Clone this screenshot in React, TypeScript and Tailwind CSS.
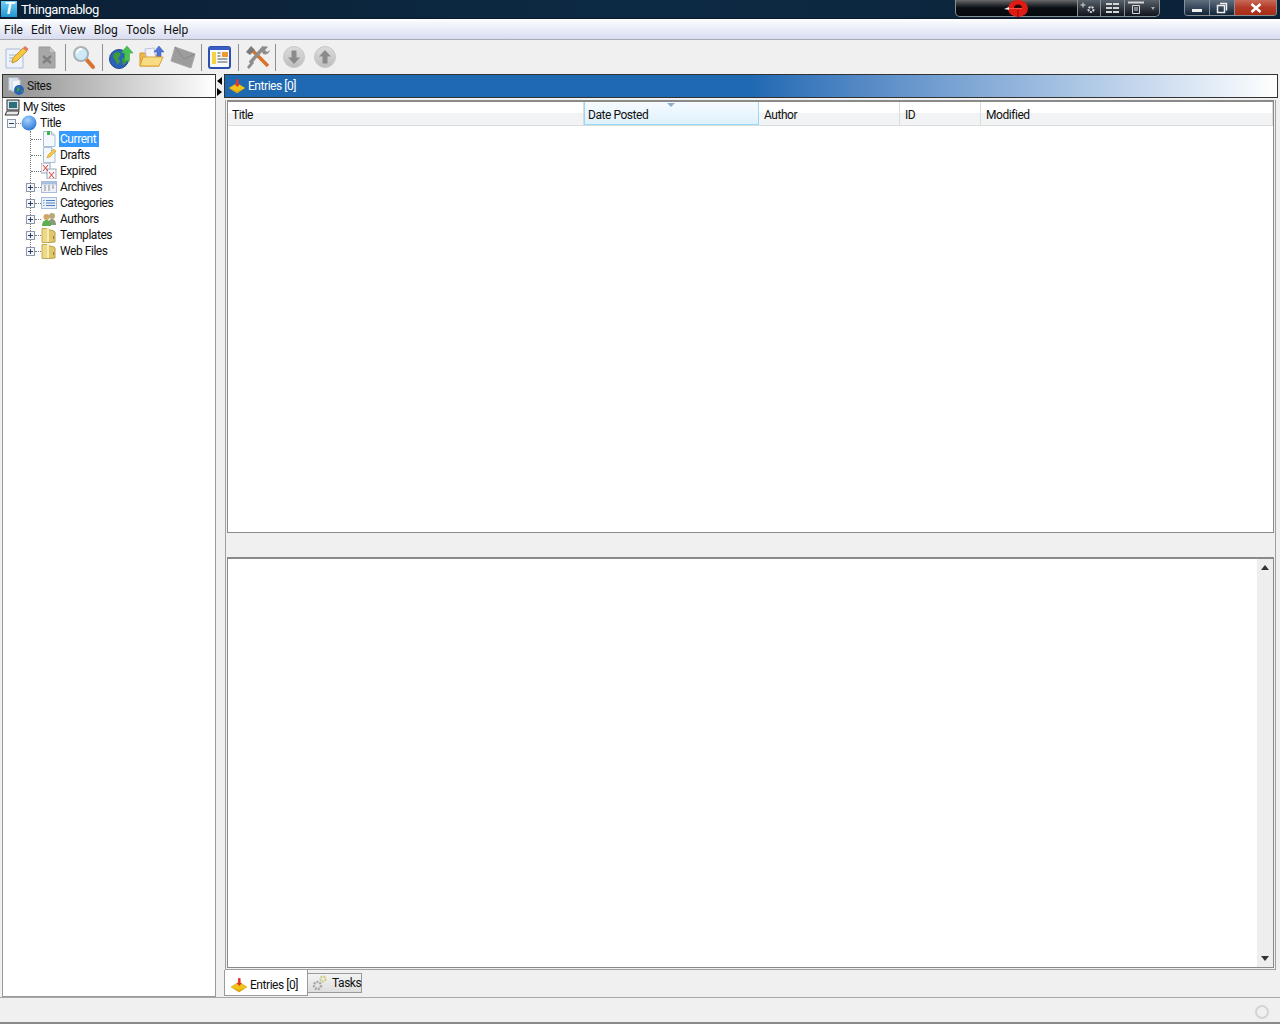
import React from "react";

const Doc = ({ children }: { children?: React.ReactNode }) => (
  <svg width="16" height="16" viewBox="0 0 16 16" className="shrink-0">
    <path d="M2.500 .5h8l3.500 3.500v11.500h-11.500z" fill="#f4f8fd" stroke="#a9bfd8" />
    <path d="M10.500 .5v3.500h3.500" fill="#dbe7f4" stroke="#a9bfd8" />
    {children}
  </svg>
);

const Folder = () => (
  <svg width="16" height="16" viewBox="0 0 16 16" className="shrink-0">
    <path d="M1 1.500h5l1 1v13h-6z" fill="#ecd98a" stroke="#c2aa55" />
    <path d="M7 2.500l6 1.500 1 1v10l-7 .5z" fill="#e2c86c" stroke="#b89c45" />
    <rect x="6" y="1" width="2" height="14" fill="#f7ecb8" />
    <rect x="12" y="9" width="1" height="3" fill="#9a8030" />
  </svg>
);

const Hat = ({ s = 16 }: { s?: number }) => (
  <svg width={s} height={s} viewBox="0 0 16 16" className="shrink-0">
    <path d="M0 10 L8 5 L16 10 L8 15z" fill="#f0c419" stroke="#c99a10" strokeWidth=".5" />
    <path d="M2 11 L8 15 L14 11 L8 13z" fill="#d9a514" />
    <rect x="7" y="1" width="2.600" height="6" rx="1" fill="#e2382b" />
    <path d="M5.500 6h5.500l-2.700 3z" fill="#e2382b" />
  </svg>
);

const Expander = ({ minus }: { minus?: boolean }) => (
  <span className="relative w-[9px] h-[9px] border border-[#8a97a8] bg-[#f3f5f8] shrink-0">
    <span className="absolute left-[1px] top-[3px] w-[5px] h-[1px] bg-[#2b3a63]" />
    {!minus && <span className="absolute left-[3px] top-[1px] w-[1px] h-[5px] bg-[#2b3a63]" />}
  </span>
);

const Dash = ({ w }: { w: string }) => (
  <span className={`${w} h-0 border-t border-dotted border-[#777] shrink-0`} />
);

const Leaf = ({ icon, label, selected }: { icon: React.ReactNode; label: string; selected?: boolean }) => (
  <div className="h-4 flex items-center pl-[28px]">
    <Dash w="w-[10px]" />
    <span className="w-4 flex justify-center shrink-0">{icon}</span>
    <span className={`ml-[2px] pl-[1px] pr-[3px] h-4 leading-4 ${selected ? "bg-[#3399ff] text-white" : ""}`}>{label}</span>
  </div>
);

const Branch = ({ icon, label }: { icon: React.ReactNode; label: string }) => (
  <div className="h-4 flex items-center pl-[23px]">
    <Expander />
    <Dash w="w-[6px]" />
    <span className="w-4 flex justify-center shrink-0">{icon}</span>
    <span className="ml-[2px] pl-[1px] h-4 leading-4">{label}</span>
  </div>
);

const Sep = () => <span className="w-[1px] h-[27px] bg-[#8f8f8f] shrink-0" />;

const ToolIcon = ({ children }: { children: React.ReactNode }) => (
  <svg width="26" height="26" viewBox="0 0 26 26" className="shrink-0">{children}</svg>
);

const Circle = ({ up }: { up?: boolean }) => (
  <ToolIcon>
    <defs>
      <linearGradient id={up ? "cu" : "cd"} x1="0" y1="0" x2="0" y2="1">
        <stop offset="0" stopColor="#dcdcdc" />
        <stop offset="1" stopColor="#bdbdbd" />
      </linearGradient>
    </defs>
    <circle cx="13" cy="13" r="10.500" fill={`url(#${up ? "cu" : "cd"})`} stroke="#c8c8c8" />
    <path
      d={up ? "M13 6l6 6.500h-3.500v7h-5v-7h-3.500z" : "M13 20l6-6.500h-3.500v-7h-5v7h-3.500z"}
      fill="#8a8a8a"
    />
  </ToolIcon>
);

export default function App() {
  const columns = [
    { label: "Title", w: "w-[356px]", pl: "pl-[4px]" },
    { label: "Date Posted", w: "w-[175px]", active: true, pl: "pl-[3px]" },
    { label: "Author", w: "w-[141px]", pl: "pl-[5px]" },
    { label: "ID", w: "w-[81px]", pl: "pl-[5px]" },
    { label: "Modified", w: "flex-1", pl: "pl-[5px]" },
  ];
  return (
    <div className="w-[1280px] h-[1024px] overflow-hidden flex flex-col bg-[#f0f0f0] text-[12px] tracking-[-.45px] text-[#111] font-['Roboto','Liberation_Sans',sans-serif]">
      {/* Title bar */}
      <div className="h-[19px] shrink-0 flex bg-gradient-to-r from-[#0a2036] via-[#0d2a44] to-[#0b2238] border-b border-[#0c1a28]">
        <div className="w-[16px] h-[16px] mt-[1px] ml-[1px] bg-gradient-to-b from-[#6fd0f5] to-[#1d94d0] text-white font-bold italic text-[16px] leading-[16px] text-center font-['Liberation_Sans',sans-serif]">T</div>
        <span className="ml-[4px] text-white text-[13px] tracking-[-.45px] leading-[19px]">Thingamablog</span>
        <div className="ml-auto flex h-[17px] text-[#dfe6ee]">
          <div className="w-[123px] bg-gradient-to-b from-[#6b6b6b] via-[#0a0f14] to-[#05090d] border border-t-0 border-[#8a8f94] rounded-bl-[5px] flex justify-center">
            <svg width="26" height="17" viewBox="0 0 26 17">
              <ellipse cx="14" cy="8.500" rx="10" ry="8.500" fill="#e01b14" />
              <path d="M10 8a4 3.500 0 0 1 8 0z" fill="#2a0605" />
              <path d="M13.500 10h1v7h-1z" fill="#7a0d0a" />
              <path d="M5 8.500h13" stroke="#ff6a5a" strokeWidth=".7" />
              <path d="M0 9l5-2v3z" fill="#f2f2f2" />
            </svg>
          </div>
          <div className="w-[23px] bg-gradient-to-b from-[#59616a] to-[#10161d] border-r border-b border-[#8a8f94] flex items-center justify-center">
            <svg width="18" height="14" viewBox="0 0 18 14" fill="none" stroke="#d6d6d6">
              <path d="M3 1.500v5M.5 4h5" />
              <circle cx="11" cy="8.500" r="2.500" strokeWidth="2" strokeDasharray="2 1" />
            </svg>
          </div>
          <div className="w-[24px] bg-gradient-to-b from-[#59616a] to-[#10161d] border-r border-b border-[#8a8f94] flex items-center justify-center">
            <svg width="15" height="10" viewBox="0 0 15 10" fill="#d6d6d6">
              <path d="M1 0h6v2H1zM8 0h6v2H8zM1 4h6v2H1zM8 4h6v2H8zM1 8h6v2H1zM8 8h6v2H8z" />
            </svg>
          </div>
          <div className="w-[35px] bg-gradient-to-b from-[#59616a] to-[#10161d] border-r border-b border-[#8a8f94] rounded-br-[5px] flex items-center justify-center">
            <svg width="30" height="16" viewBox="0 0 30 16" fill="none" stroke="#d6d6d6">
              <path d="M1 2.500h16" strokeWidth="2" />
              <path d="M5.500 5.500h7v8h-7zM7 8h4M7 10h4" />
              <path d="M24 7h4l-2 3z" fill="#aaa" stroke="none" />
            </svg>
          </div>
          <div className="ml-[24px] mr-[3px] flex w-[93px] h-[16px] border border-t-0 border-[#8a8f94] rounded-b-[4px] overflow-hidden">
            <div className="w-[25px] bg-gradient-to-b from-[#5f6f7e] to-[#12263a] border-r border-[#8a8f94] flex items-center justify-center pt-[5px]">
              <span className="w-[10px] h-[3px] bg-[#f0f0f0]" />
            </div>
            <div className="w-[25px] bg-gradient-to-b from-[#5f6f7e] to-[#12263a] border-r border-[#8a8f94] flex items-center justify-center">
              <svg width="12" height="12" viewBox="0 0 12 12" fill="none" stroke="#eee" strokeWidth="1.500">
                <path d="M4 1.500h6.500v7" />
                <path d="M1.500 3.500h7v7h-7z" />
              </svg>
            </div>
            <div className="flex-1 bg-gradient-to-b from-[#c9695a] via-[#b33a26] to-[#a82d14] flex items-center justify-center">
              <svg width="12" height="10" viewBox="0 0 12 10" stroke="#fff" strokeWidth="2.500">
                <path d="M1.500 1l9 8M10.500 1l-9 8" />
              </svg>
            </div>
          </div>
        </div>
      </div>

      {/* Menu bar */}
      <div className="h-[21px] shrink-0 flex items-center border-t border-white border-b border-b-[#a9a9b0] bg-gradient-to-b from-[#fbfcfe] to-[#d8dcf0] pl-[4px] pt-[1px] gap-[8px] text-[12px] tracking-[.05px]">
        <span>File</span>
        <span>Edit</span>
        <span>View</span>
        <span>Blog</span>
        <span>Tools</span>
        <span>Help</span>
      </div>

      {/* Toolbar */}
      <div className="h-[34px] shrink-0 flex items-center pl-[3px]">
        <ToolIcon>
          <path d="M3 5h14l3 3v16H3z" fill="#eef3fb" stroke="#a8bcd8" />
          <path d="M6 11h10M6 14h8M6 17h7" stroke="#9db4d4" />
          <path d="M9 19l1-5L20 4l4 3-10 10z" fill="#f7c843" stroke="#c9952a" />
          <path d="M20 4l4 3 1.500-2-3.500-3z" fill="#e2736a" />
        </ToolIcon>
        <div className="w-[5px]" />
        <ToolIcon>
          <path d="M5 3h11l5 5v16H5z" fill="#a8a8a8" stroke="#9a9a9a" />
          <path d="M16 3v5h5" fill="#c4c4c4" />
          <path d="M9 12l8 7M17 12l-8 7" stroke="#808080" strokeWidth="2.500" />
        </ToolIcon>
        <div className="w-[5px]" />
        <Sep />
        <div className="w-[4px]" />
        <ToolIcon>
          <path d="M16 15l7 8" stroke="#d9722c" strokeWidth="4" strokeLinecap="round" />
          <circle cx="11" cy="10" r="7" fill="#cfeaf7" stroke="#a9b2b8" strokeWidth="2" />
          <path d="M7 9a5 5 0 0 1 5-4" stroke="#fff" strokeWidth="2" fill="none" />
        </ToolIcon>
        <div className="w-[6px]" />
        <Sep />
        <div className="w-[5px]" />
        <ToolIcon>
          <circle cx="11" cy="15" r="9.500" fill="#2a62b8" stroke="#234a86" />
          <path d="M6 9l5-1 2 3-3 3 2 3-2 4-3-5-2-3zM14 14l5 1-1 4-3 2z" fill="#3f9a3c" />
          <path d="M19 2l6 7h-3.500v8h-5V9H13z" fill="#46c24e" stroke="#2f9a39" strokeWidth=".5" />
        </ToolIcon>
        <div className="w-[5px]" />
        <ToolIcon>
          <path d="M1 9h8l2 2h9v11H1z" fill="#efb84a" stroke="#d6932a" />
          <path d="M6 5l9-1 2 12-9 1z" fill="#f2f4fa" stroke="#b9c3d6" />
          <path d="M20 2l5 6h-3v8h-4V8h-3z" fill="#4f73d9" stroke="#3a56ad" strokeWidth=".5" />
          <path d="M1 22l3-9h20l-4 9z" fill="#f8dc84" stroke="#d9a13a" />
        </ToolIcon>
        <div className="w-[5px]" />
        <ToolIcon>
          <path d="M5 3l20 7-4 14L1 17z" fill="#9c9c9c" stroke="#a6a6a6" />
          <path d="M5 3l9 12 11-5" fill="none" stroke="#8a8a8a" />
        </ToolIcon>
        <div className="w-[5px]" />
        <Sep />
        <div className="w-[5px]" />
        <ToolIcon>
          <rect x="2" y="3" width="21" height="21" rx="2" fill="#f7f9fd" stroke="#2d4fb0" strokeWidth="2" />
          <rect x="2" y="3" width="21" height="3" fill="#3a5cc4" />
          <rect x="5" y="8" width="4" height="12" fill="#f4d33e" />
          <rect x="15" y="8" width="6" height="5" fill="#ef9a2c" />
          <path d="M10.500 9h3M10.500 12h3M10.500 15h10M10.500 18h10" stroke="#555" />
        </ToolIcon>
        <div className="w-[5px]" />
        <Sep />
        <div className="w-[5px]" />
        <ToolIcon>
          <path d="M6 4l18 18" stroke="#d9722c" strokeWidth="3.500" />
          <path d="M20 3l-14 16" stroke="#8d8d8d" strokeWidth="3.500" />
          <path d="M2 8l5-6 4 4-5 5z" fill="#7a7a7a" />
          <path d="M17 5a5 5 0 0 1 7-2l-3 3 2 2 3-2a5 5 0 0 1-7 4z" fill="#8d8d8d" />
          <path d="M3 23l5-6 2 2-5 6z" fill="#8d8d8d" />
        </ToolIcon>
        <div className="w-[5px]" />
        <Sep />
        <div className="w-[5px]" />
        <Circle />
        <div className="w-[5px]" />
        <Circle up />
      </div>

      {/* Main */}
      <div className="flex-1 min-h-0 flex pl-[2px] pr-[2px]">
        {/* Left */}
        <div className="w-[214px] flex flex-col shrink-0">
          <div className="h-[24px] shrink-0 flex items-center border border-[#333] bg-gradient-to-r from-[#999999] from-[10%] to-white pl-[4px]">
            <svg width="18" height="18" viewBox="0 0 18 18" className="shrink-0">
              <rect x="2" y="1" width="9" height="12" fill="#e6edf8" stroke="#c3cee0" />
              <rect x="5" y="3" width="8" height="11" fill="#f2f5fb" stroke="#c3cee0" />
              <circle cx="12" cy="13" r="5" fill="#2a62b8" />
              <path d="M10 10l3 1-1 3-2 1zM14 13l2 0-1 3z" fill="#3f9a3c" />
            </svg>
            <span className="ml-[2px]">Sites</span>
          </div>
          <div className="flex-1 bg-white border border-t-0 border-[#9a9a9a] pt-[1px]">
            <div className="h-4 flex items-center pl-[1px]">
              <svg width="17" height="17" viewBox="0 0 17 17" className="shrink-0">
                <rect x="3" y="1" width="12" height="10" fill="#d8e2e8" stroke="#303030" />
                <rect x="5" y="3" width="8" height="6" fill="#2c6f7c" />
                <path d="M1 16l2-4h12l-1 4z" fill="#e8e8e8" stroke="#303030" />
              </svg>
              <span className="ml-[2px]">My Sites</span>
            </div>
            <div className="h-4 flex items-center pl-[4px]">
              <Expander minus />
              <Dash w="w-[5px]" />
              <svg width="16" height="16" viewBox="0 0 16 16" className="shrink-0">
                <defs>
                  <radialGradient id="ball" cx=".4" cy=".3" r=".8">
                    <stop offset="0" stopColor="#a5d2fb" />
                    <stop offset="1" stopColor="#1f6fd6" />
                  </radialGradient>
                </defs>
                <circle cx="8" cy="8" r="7.500" fill="url(#ball)" />
              </svg>
              <span className="ml-[3px]">Title</span>
            </div>
            <div className="relative">
              <span className="absolute left-[27px] top-0 h-[120px] w-0 border-l border-dotted border-[#777]" />
              <Leaf selected label="Current" icon={<Doc><rect x="6" y="0" width="3" height="4" fill="#3fb64a" /></Doc>} />
              <Leaf label="Drafts" icon={<Doc><path d="M6 11l1-3 6-6 2 2-6 6z" fill="#f3c843" stroke="#c9952a" strokeWidth=".5" /></Doc>} />
              <Leaf
                label="Expired"
                icon={
                  <svg width="16" height="16" viewBox="0 0 16 16" className="shrink-0">
                    <rect x="0" y="0" width="9" height="10" fill="#f4f7fb" stroke="#9aa7b8" />
                    <rect x="6" y="6" width="9" height="10" fill="#f4f7fb" stroke="#9aa7b8" />
                    <path d="M2 2l5 6M7 2l-5 6M8 9l5 6M13 9l-5 6" stroke="#e3342a" />
                  </svg>
                }
              />
              <Branch
                label="Archives"
                icon={
                  <svg width="16" height="16" viewBox="0 0 16 16" className="shrink-0">
                    <rect x=".5" y="2.500" width="15" height="11" fill="#eef2f8" stroke="#a8bcd8" />
                    <rect x="1" y="3" width="14" height="2.500" fill="#a8c0e0" />
                    <path d="M3 7h2M7 7h2M11 7h2M3 9h2M7 9h2M11 9h2M3 11h2M7 11h2" stroke="#8a8a8a" />
                  </svg>
                }
              />
              <Branch
                label="Categories"
                icon={
                  <svg width="16" height="16" viewBox="0 0 16 16" className="shrink-0">
                    <rect x=".5" y="2.500" width="15" height="11" fill="#e8f0fa" stroke="#a8bcd8" />
                    <path d="M5 5.500h9M5 8h9M5 10.500h9" stroke="#4f7fc0" />
                    <path d="M2 5.500h1.500M2 8h1.500M2 10.500h1.500" stroke="#7a9ccc" />
                  </svg>
                }
              />
              <Branch
                label="Authors"
                icon={
                  <svg width="16" height="16" viewBox="0 0 16 16" className="shrink-0">
                    <circle cx="11" cy="5" r="3" fill="#b9a97a" />
                    <path d="M7 14c0-4 2-6 4-6s4 2 4 6z" fill="#8a9a7a" />
                    <circle cx="5.500" cy="6" r="3" fill="#d2a56a" />
                    <path d="M1 15c0-4 2-6 4.500-6s4.500 2 4.500 6z" fill="#5cb04e" />
                  </svg>
                }
              />
              <Branch label="Templates" icon={<Folder />} />
              <Branch label="Web Files" icon={<Folder />} />
            </div>
          </div>
        </div>

        {/* Divider */}
        <div className="w-[8px] shrink-0 flex flex-col pt-[3px] items-center">
          <span className="w-0 h-0 border-y-[4.500px] border-y-transparent border-r-[5px] border-r-black -ml-[1px]" />
          <span className="w-0 h-0 mt-[3px] border-y-[4.500px] border-y-transparent border-l-[5px] border-l-black -ml-[1px]" />
        </div>

        {/* Right */}
        <div className="flex-1 min-w-0 flex flex-col">
          <div className="h-[24px] shrink-0 flex items-center border border-[#333] bg-gradient-to-r from-[#1f69b3] from-[50%] to-white pl-[4px] text-white">
            <Hat />
            <span className="ml-[3px]">Entries [0]</span>
          </div>

          {/* Tab content */}
          <div className="mt-[2px] ml-[1px] mr-[2px] px-[1px] pb-[1px] border-x border-b border-[#a0a0a0] shrink-0 flex flex-col">
            {/* Table */}
            <div className="h-[433px] shrink-0 border border-t-2 border-[#8a8a8a] bg-white flex flex-col">
              <div className="h-[24px] shrink-0 flex bg-gradient-to-b from-white from-50% to-[#f2f3f4] to-50% border-b border-[#dcdcdc]">
                {columns.map((c) => (
                  <div
                    key={c.label}
                    className={`relative ${c.w} ${c.pl} shrink-0 pt-[5px] leading-[17px] ${
                      c.active
                        ? "bg-gradient-to-b from-[#f5fbff] to-[#dff1fb] border-x border-b border-[#96d9f9]"
                        : "border-r border-[#dcdcdc]"
                    }`}
                  >
                    {c.active && (
                      <span className="absolute left-[82px] top-[1px] w-0 h-0 border-x-[4px] border-x-transparent border-t-[4px] border-t-[#8fb0c6]" />
                    )}
                    {c.label}
                  </div>
                ))}
              </div>
            </div>

            {/* Splitter */}
            <div className="h-[24px] shrink-0" />

            {/* Viewer */}
            <div className="h-[411px] shrink-0 border border-t-2 border-[#8a8a8a] bg-white flex justify-end">
              <div className="w-[16px] bg-[#eeeeee] flex flex-col justify-between items-center py-[6px]">
                <span className="w-0 h-0 border-x-[4px] border-x-transparent border-b-[5px] border-b-[#333]" />
                <span className="w-0 h-0 border-x-[4px] border-x-transparent border-t-[5px] border-t-[#333]" />
              </div>
            </div>
          </div>

          {/* Tabs */}
          <div className="flex-1 flex items-start">
            <div className="h-[26px] w-[84px] bg-white border border-t-0 border-[#9a9a9a] flex items-center pl-[6px] pt-[4px]">
              <Hat />
              <span className="ml-[3px] pt-[1px]">Entries [0]</span>
            </div>
            <div className="h-[20px] w-[54px] mt-[3px] bg-gradient-to-b from-[#f3f3f3] to-[#dedede] border border-[#9a9a9a] border-l-0 flex items-center pl-[4px]">
              <svg width="16" height="16" viewBox="0 0 16 16" className="shrink-0" fill="none">
                <circle cx="5.500" cy="10.500" r="3.500" stroke="#a8a8a8" strokeWidth="2.500" strokeDasharray="2 1" />
                <circle cx="11" cy="4" r="2.500" stroke="#c9cc7a" strokeWidth="2" strokeDasharray="2 1" />
              </svg>
              <span className="ml-[4px]">Tasks</span>
            </div>
          </div>
        </div>
      </div>

      {/* Status bar */}
      <div className="h-[27px] shrink-0 border-t border-[#a8a8a8] flex items-center justify-end pr-[11px] border-b-2 border-b-[#8a8a8a] bg-[#f0f0f0]">
        <span className="w-[14px] h-[14px] rounded-full border-2 border-[#d4d4d4] mt-[3px]" />
      </div>
    </div>
  );
}
